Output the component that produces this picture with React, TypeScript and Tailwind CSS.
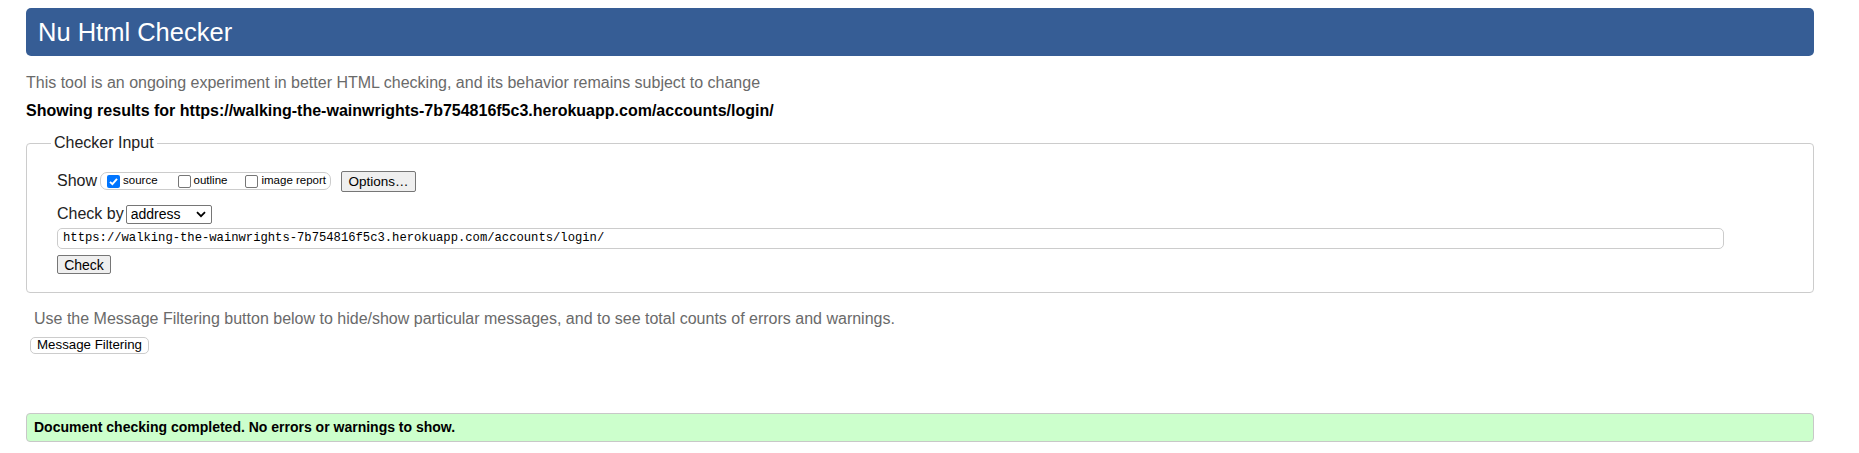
import React from 'react'

function Box({ checked, label }: { checked?: boolean; label: string }) {
  return (
    <label className="flex items-center gap-[3px]">
      {checked ? (
        <span className="w-[13px] h-[13px] rounded-[2px] bg-[#0075ff] flex items-center justify-center">
          <svg width="11" height="11" viewBox="0 0 11 11">
            <path d="M2 5.8 L4.4 8.2 L9 2.8" stroke="white" strokeWidth="1.9" fill="none" />
          </svg>
        </span>
      ) : (
        <span className="w-[13px] h-[13px] rounded-[2px] border border-[#767676] bg-white" />
      )}
      <span className="text-[11.5px] text-black">{label}</span>
    </label>
  )
}

export default function App() {
  return (
    <div className="min-h-screen bg-white pt-[8px] pl-[26px] pr-[45px] font-['Liberation_Sans',Arial,sans-serif] text-[16px] text-[#222]">
      {/* Header */}
      <div className="h-[48px] rounded-[5px] bg-[#365d95] flex items-center px-[12px]">
        <h1 className="text-white text-[25.5px]">Nu Html Checker</h1>
      </div>

      <p className="mt-[17px] leading-[20px] text-[#6a6a6a]">
        This tool is an ongoing experiment in better HTML checking, and its behavior remains subject to change
      </p>
      <p className="mt-[8px] leading-[20px] font-bold text-black">
        Showing results for https://walking-the-wainwrights-7b754816f5c3.herokuapp.com/accounts/login/
      </p>

      {/* Checker input */}
      <fieldset className="mt-[12px] border border-[#cccccc] rounded-[4px] pl-[16px] pb-[15px]">
        <legend className="ml-[8px] px-[3px] leading-[20px] text-[16px] text-[#222]">Checker Input</legend>

        <div className="pl-[14px]">
          <div className="mt-[17px] flex items-center h-[22px]">
            <span className="text-[#222]">Show</span>
            <div className="ml-[3px] h-[18px] flex items-center border border-[#cccccc] rounded-[7px] pl-[6px] pr-[4px]">
              <Box checked label="source" />
              <span className="w-[20px]" />
              <Box label="outline" />
              <span className="w-[18px]" />
              <Box label="image report" />
            </div>
            <button className="ml-[10px] h-[21px] w-[75px] bg-[#efefef] border border-[#767676] rounded-[2px] text-[13.5px] text-black">
              Options…
            </button>
          </div>

          <div className="mt-[11px] flex items-center h-[22px]">
            <span className="text-[#222]">Check by</span>
            <div className="ml-[2px] h-[19px] w-[86px] border border-[#767676] rounded-[2px] flex items-center justify-between pl-[4px] pr-[5px] text-[14px] text-black">
              <span>address</span>
              <svg width="10" height="7" viewBox="0 0 10 7">
                <path d="M1 1.2 L5 5.2 L9 1.2" stroke="black" strokeWidth="1.8" fill="none" />
              </svg>
            </div>
          </div>

          <div className="mt-[3px] w-[1667px] h-[21px] border border-[#cccccc] rounded-[5px] flex items-center pl-[5px] font-['Liberation_Mono','Courier_New',monospace] text-[12.2px] text-black">
            https://walking-the-wainwrights-7b754816f5c3.herokuapp.com/accounts/login/
          </div>

          <button className="mt-[6px] h-[19px] w-[54px] bg-[#efefef] border border-[#767676] rounded-[2px] text-[14px] text-black leading-none">
            Check
          </button>
        </div>
      </fieldset>

      <p className="mt-[16px] ml-[8px] leading-[20px] text-[#6a6a6a]">
        Use the Message Filtering button below to hide/show particular messages, and to see total counts of errors and warnings.
      </p>
      <button className="mt-[8px] ml-[4px] h-[17px] w-[119px] border border-[#cccccc] rounded-[5px] bg-white text-[13.3px] text-black leading-none">
        Message Filtering
      </button>

      <div className="mt-[57px] h-[29px] border border-[#c8c8c8] rounded-[4px] bg-[#ccffcc] flex items-center pl-[7px]">
        <span className="font-bold text-[14px] text-black">Document checking completed. No errors or warnings to show.</span>
      </div>
    </div>
  )
}
